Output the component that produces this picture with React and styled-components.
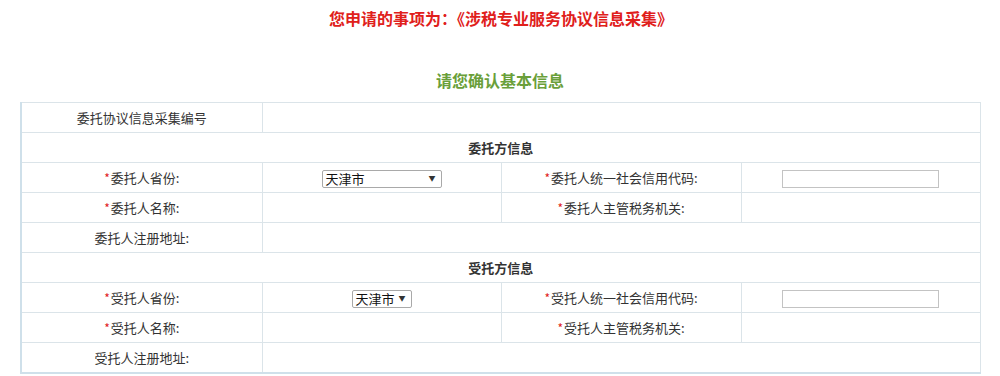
import React from 'react';
import styled, { createGlobalStyle } from 'styled-components';

const GlobalStyle = createGlobalStyle`
    body {
        margin: 0;
        background: #ffffff;
        font-family: "Noto Sans CJK SC", "Noto Sans", sans-serif;
    }
`

const Page = styled.div`
    width: 1000px;
    padding-top: 6px;
`

const Title = styled.h1`
    margin: 0;
    height: 24px;
    line-height: 24px;
    text-align: center;
    font-size: 16px;
    font-weight: bold;
    color: #e0201b;
    padding-left: 2px;
    white-space: nowrap;
`

const SubTitle = styled.h2`
    margin: 38px 0 0;
    height: 24px;
    line-height: 24px;
    text-align: center;
    font-size: 16px;
    font-weight: bold;
    color: #6a9f3a;
`

const Table = styled.table`
    margin: 10px 0 0 20px;
    width: 959px;
    border-collapse: collapse;
    table-layout: fixed;
    border-top: 1px solid #d4e2ea;
    border-left: 2px solid #cfe0ea;
    border-right: 1px solid #d4dde2;
    border-bottom: 2px solid #cfe0ea;
`

const Cell = styled.td`
    height: 29px;
    padding: 0;
    border: 1px solid #dbe4e9;
    text-align: center;
    vertical-align: middle;
    font-size: 13px;
    color: #333333;
    white-space: nowrap;
    font-weight: ${p => (p.$head ? 'bold' : 'normal')};
`

const Star = styled.span`
    color: #e0201b;
    font-size: 12px;
    margin-right: 1px;
`

const Select = styled.span`
    display: inline-flex;
    align-items: center;
    justify-content: space-between;
    gap: 3px;
    box-sizing: border-box;
    width: ${p => p.$w}px;
    height: 18px;
    padding: 0 5px 0 3px;
    border: 1px solid #a9a9a9;
    border-radius: 2px;
    font-size: 13px;
    color: #111;
    white-space: nowrap;
    vertical-align: middle;
    background: #fff;
`

const Arrow = styled.span`
    font-size: 7px;
    color: #333;
    line-height: 1;
`

const TextInput = styled.span`
    display: inline-block;
    box-sizing: border-box;
    width: 157px;
    height: 18px;
    border: 1px solid #c3c3c3;
    vertical-align: middle;
    background: #fff;
`

const Label = ({ req, children }) => (
    <Cell>
        {req && <Star>*</Star>}
        {children}
    </Cell>
)

const Party = ({ head, role, selectW }) => (
    <>
        <tr>
            <Cell colSpan={4} $head>{head}</Cell>
        </tr>
        <tr>
            <Label req>{role}省份:</Label>
            <Cell>
                <Select $w={selectW}>
                    天津市<Arrow>▼</Arrow>
                </Select>
            </Cell>
            <Label req>{role}统一社会信用代码:</Label>
            <Cell><TextInput /></Cell>
        </tr>
        <tr>
            <Label req>{role}名称:</Label>
            <Cell />
            <Label req>{role}主管税务机关:</Label>
            <Cell />
        </tr>
        <tr>
            <Label>{role}注册地址:</Label>
            <Cell colSpan={3} />
        </tr>
    </>
)

export default function App() {
    return (
        <Page>
            <GlobalStyle />
            <Title>您申请的事项为：《涉税专业服务协议信息采集》</Title>
            <SubTitle>请您确认基本信息</SubTitle>
            <Table>
                <colgroup>
                    <col style={{ width: 241 }} />
                    <col style={{ width: 239 }} />
                    <col style={{ width: 240 }} />
                    <col style={{ width: 239 }} />
                </colgroup>
                <tbody>
                    <tr>
                        <Label>委托协议信息采集编号</Label>
                        <Cell colSpan={3} />
                    </tr>
                    <Party head="委托方信息" role="委托人" selectW={120} />
                    <Party head="受托方信息" role="受托人" selectW={60} />
                </tbody>
            </Table>
        </Page>
    )
}
